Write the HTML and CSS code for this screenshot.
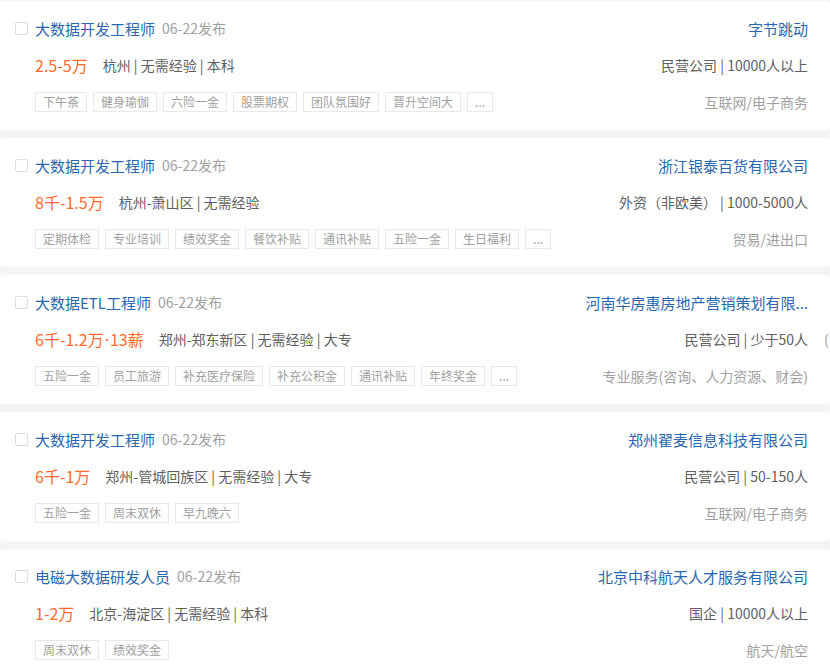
FILE: index.html
```html
<!DOCTYPE html>
<html lang="zh-CN">
<head>
  <meta charset="UTF-8" />
  <meta name="viewport" content="width=device-width, initial-scale=1" />
  <title>职位列表</title>
  <link rel="stylesheet" href="styles.css">
</head>
<body>

  <div class="list">

    <div class="job">
      <div class="job-main">
        <div class="row title-row">
          <span class="check"></span>
          <a class="title" href="#">大数据开发工程师</a>
          <span class="date">06-22发布</span>
        </div>
        <div class="row info-row">
          <span class="salary">2.5-5万</span>
          <span class="info">杭州 | 无需经验 | 本科</span>
        </div>
        <div class="tags">
          <span class="tag">下午茶</span>
          <span class="tag">健身瑜伽</span>
          <span class="tag">六险一金</span>
          <span class="tag">股票期权</span>
          <span class="tag">团队氛围好</span>
          <span class="tag">晋升空间大</span>
          <span class="tag">...</span>
        </div>
      </div>
      <div class="job-side">
        <div class="row company"><a href="#">字节跳动</a></div>
        <div class="row meta">民营公司 | 10000人以上</div>
        <div class="industry">互联网/电子商务</div>
      </div>
    </div>

    <div class="job">
      <div class="job-main">
        <div class="row title-row">
          <span class="check"></span>
          <a class="title" href="#">大数据开发工程师</a>
          <span class="date">06-22发布</span>
        </div>
        <div class="row info-row">
          <span class="salary">8千-1.5万</span>
          <span class="info">杭州-萧山区 | 无需经验</span>
        </div>
        <div class="tags">
          <span class="tag">定期体检</span>
          <span class="tag">专业培训</span>
          <span class="tag">绩效奖金</span>
          <span class="tag">餐饮补贴</span>
          <span class="tag">通讯补贴</span>
          <span class="tag">五险一金</span>
          <span class="tag">生日福利</span>
          <span class="tag">...</span>
        </div>
      </div>
      <div class="job-side">
        <div class="row company"><a href="#">浙江银泰百货有限公司</a></div>
        <div class="row meta">外资（非欧美） | 1000-5000人</div>
        <div class="industry">贸易/进出口</div>
      </div>
    </div>

    <div class="job">
      <div class="job-main">
        <div class="row title-row">
          <span class="check"></span>
          <a class="title" href="#">大数据ETL工程师</a>
          <span class="date">06-22发布</span>
        </div>
        <div class="row info-row">
          <span class="salary">6千-1.2万<span class="dot">·</span>13薪</span>
          <span class="info">郑州-郑东新区 | 无需经验 | 大专</span>
        </div>
        <div class="tags">
          <span class="tag">五险一金</span>
          <span class="tag">员工旅游</span>
          <span class="tag">补充医疗保险</span>
          <span class="tag">补充公积金</span>
          <span class="tag">通讯补贴</span>
          <span class="tag">年终奖金</span>
          <span class="tag">...</span>
        </div>
      </div>
      <div class="job-side">
        <div class="row company"><a href="#">河南华房惠房地产营销策划有限...</a></div>
        <div class="row meta">民营公司 | 少于50人<span class="peek">(</span></div>
        <div class="industry">专业服务(咨询、人力资源、财会)</div>
      </div>
    </div>

    <div class="job">
      <div class="job-main">
        <div class="row title-row">
          <span class="check"></span>
          <a class="title" href="#">大数据开发工程师</a>
          <span class="date">06-22发布</span>
        </div>
        <div class="row info-row">
          <span class="salary">6千-1万</span>
          <span class="info">郑州-管城回族区 | 无需经验 | 大专</span>
        </div>
        <div class="tags">
          <span class="tag">五险一金</span>
          <span class="tag">周末双休</span>
          <span class="tag">早九晚六</span>
        </div>
      </div>
      <div class="job-side">
        <div class="row company"><a href="#">郑州翟麦信息科技有限公司</a></div>
        <div class="row meta">民营公司 | 50-150人</div>
        <div class="industry">互联网/电子商务</div>
      </div>
    </div>

    <div class="job">
      <div class="job-main">
        <div class="row title-row">
          <span class="check"></span>
          <a class="title" href="#">电磁大数据研发人员</a>
          <span class="date">06-22发布</span>
        </div>
        <div class="row info-row">
          <span class="salary">1-2万</span>
          <span class="info">北京-海淀区 | 无需经验 | 本科</span>
        </div>
        <div class="tags">
          <span class="tag">周末双休</span>
          <span class="tag">绩效奖金</span>
        </div>
      </div>
      <div class="job-side">
        <div class="row company"><a href="#">北京中科航天人才服务有限公司</a></div>
        <div class="row meta">国企 | 10000人以上</div>
        <div class="industry">航天/航空</div>
      </div>
    </div>

  </div>

</body>
</html>
```

FILE: styles.css
```css
* {
  box-sizing: border-box;
}

html,
body {
  overflow: hidden;
}

body {
  margin: 0;
  padding-top: 1px;
  background: #f4f4f4;
  font-family: "Noto Sans CJK SC", "Noto Sans", sans-serif;
  color: #606060;
}

a {
  text-decoration: none;
}

.list {
  display: flex;
  flex-direction: column;
  gap: 8px;
}

.job {
  display: flex;
  justify-content: space-between;
  height: 129px;
  padding: 16px 22px 0 35px;
  background: #fff;
  border-radius: 4px;
}

.row {
  display: flex;
  align-items: center;
  height: 22px;
  white-space: nowrap;
}

.title-row,
.company {
  margin-bottom: 15px;
}

.info-row,
.meta {
  margin-bottom: 16px;
}

/* 左侧：职位信息 */
.check {
  width: 13px;
  height: 13px;
  margin-left: -20px;
  margin-right: 7px;
  border: 1px solid #dcdcdc;
  border-radius: 2px;
  background: #fff;
}

.title {
  font-size: 15px;
  color: #2a67ad;
  margin-right: 7px;
}

.date {
  font-size: 14px;
  color: #a0a0a0;
}

.salary {
  font-size: 16px;
  color: #ff6a2b;
  margin-right: 15px;
}

.salary .dot {
  font-family: "Noto Sans", sans-serif;
  margin: 0 1px;
}

.info {
  font-size: 14px;
  color: #606060;
}

.tags {
  display: flex;
  gap: 6px;
}

.tag {
  height: 20px;
  line-height: 18px;
  padding: 0 7px;
  border: 1px solid #e8e8e8;
  font-size: 12px;
  color: #a0a0a0;
  white-space: nowrap;
}

/* 右侧：公司信息 */
.job-side {
  display: flex;
  flex-direction: column;
  align-items: flex-end;
}

.company a {
  font-size: 15px;
  color: #2a67ad;
}

.meta {
  font-size: 14px;
  color: #606060;
}

.peek {
  width: 0;
  text-indent: 16px;
  color: #999;
}

.industry {
  height: 20px;
  line-height: 20px;
  font-size: 14px;
  color: #a0a0a0;
  white-space: nowrap;
}
```
